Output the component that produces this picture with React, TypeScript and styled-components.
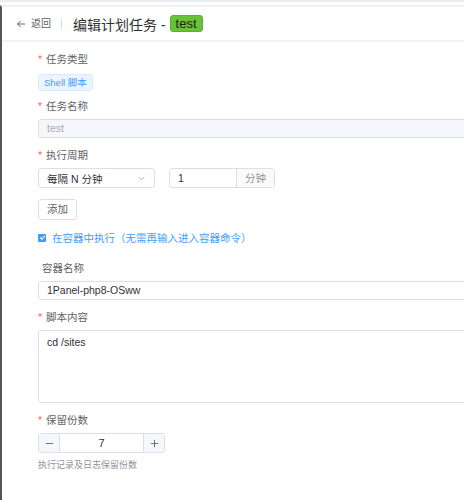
import React from "react";
import styled, { createGlobalStyle } from "styled-components";

const Global = createGlobalStyle`
  body {
    margin: 0;
    background: #fff;
    font-family: "Liberation Sans", "Noto Sans CJK SC", sans-serif;
    color: #303133;
    overflow: hidden;
  }
`;

const TopStrip = styled.div`
  height: 2px;
  background: #e8ecf5;
  border-bottom: 3px solid #fff;
`;

const Page = styled.div`
  border-top: 2px solid #eef0f3;
  border-left: 2px solid #555;
  height: 493px;
  overflow: hidden;
`;

const Header = styled.div`
  display: flex;
  align-items: center;
  height: 33px;
  padding-left: 14px;
  border-bottom: 2px solid #f2f3f5;
`;

const Back = styled.span`
  display: flex;
  align-items: center;
  gap: 5px;
  font-size: 10px;
  color: #606266;
  padding-right: 10px;
  border-right: 1px solid #dcdfe6;
  line-height: 12px;
`;

const Title = styled.span`
  font-size: 14px;
  color: #303133;
  margin-left: 11px;
`;

const GreenTag = styled.span`
  margin-left: 4px;
  background: #67c23a;
  color: #222;
  border: 1px solid #5daf34;
  border-radius: 3px;
  font-size: 13px;
  padding: 0 5px;
  line-height: 15px;
`;

const Form = styled.div`
  padding: 11px 0 0 36px;
  display: flex;
  flex-direction: column;
`;

const Item = styled.div<{ mb?: number }>`
  margin-bottom: ${(p) => p.mb ?? 11}px;
`;

const Label = styled.div<{ req?: boolean }>`
  font-size: 10.5px;
  color: #606266;
  line-height: 13px;
  margin-bottom: 6px;
  &::before {
    content: ${(p) => (p.req ? '"*"' : '""')};
    color: #f56c6c;
    margin-right: 4px;
  }
`;

const BlueTag = styled.span`
  display: inline-block;
  background: #ecf5ff;
  border: 1px solid #d9ecff;
  color: #409eff;
  font-size: 9.5px;
  line-height: 13px;
  padding: 1px 5px;
  border-radius: 3px;
`;

const Input = styled.div<{ disabled?: boolean; h?: number }>`
  width: 480px;
  height: ${(p) => p.h ?? 19}px;
  box-sizing: border-box;
  border: 1px solid #dcdfe6;
  border-radius: 3px;
  background: ${(p) => (p.disabled ? "#f5f7fa" : "#fff")};
  color: ${(p) => (p.disabled ? "#a8abb2" : "#303133")};
  font-size: 10.5px;
  padding: ${(p) => (p.h ? "4px 8px" : "0 8px")};
  line-height: ${(p) => (p.h ? "14px" : "17px")};
`;

const Row = styled.div`
  display: flex;
  gap: 14px;
`;

const Select = styled.div`
  width: 117px;
  height: 20px;
  box-sizing: border-box;
  border: 1px solid #dcdfe6;
  border-radius: 3px;
  display: flex;
  align-items: center;
  justify-content: space-between;
  padding: 0 8px;
  font-size: 10.5px;
  color: #303133;
`;

const Group = styled.div`
  display: flex;
  width: 106px;
  height: 20px;
  box-sizing: border-box;
  border: 1px solid #dcdfe6;
  border-radius: 3px;
  font-size: 10.5px;
`;

const GroupInput = styled.div`
  flex: 1;
  padding: 0 8px;
  line-height: 18px;
`;

const Append = styled.div`
  width: 37px;
  border-left: 1px solid #dcdfe6;
  background: #fafafa;
  color: #909399;
  text-align: center;
  line-height: 18px;
`;

const Button = styled.div`
  display: inline-block;
  border: 1px solid #dcdfe6;
  border-radius: 3px;
  font-size: 10.5px;
  color: #606266;
  padding: 0 8px;
  line-height: 19px;
`;

const Check = styled.div`
  display: flex;
  align-items: center;
  gap: 6px;
  font-size: 10.5px;
  color: #409eff;
`;

const Box = styled.span`
  width: 8px;
  height: 8px;
  background: #409eff;
  border-radius: 1px;
  display: flex;
  align-items: center;
  justify-content: center;
`;

const Number = styled.div`
  display: flex;
  width: 127px;
  height: 20px;
  box-sizing: border-box;
  border: 1px solid #dcdfe6;
  border-radius: 3px;
  font-size: 11px;
`;

const Step = styled.div<{ side: "l" | "r" }>`
  width: 20px;
  background: #f5f7fa;
  color: #606266;
  display: flex;
  align-items: center;
  justify-content: center;
  ${(p) => (p.side === "l" ? "border-right" : "border-left")}: 1px solid #dcdfe6;
`;

const NumVal = styled.div`
  flex: 1;
  text-align: center;
  line-height: 18px;
  color: #303133;
`;

const Help = styled.div`
  font-size: 9px;
  color: #909399;
  margin-top: 5px;
`;

export default function App() {
  return (
    <>
      <Global />
      <TopStrip />
      <Page>
        <Header>
          <Back>
            <svg width="10" height="10" viewBox="0 0 10 10" fill="none" stroke="#606266" strokeWidth="1">
              <path d="M9 5H1.5M4.5 2L1.5 5l3 3" />
            </svg>
            返回
          </Back>
          <Title>编辑计划任务 -</Title>
          <GreenTag>test</GreenTag>
        </Header>
        <Form>
          <Item mb={9}>
            <Label req>任务类型</Label>
            <BlueTag>Shell 脚本</BlueTag>
          </Item>
          <Item>
            <Label req>任务名称</Label>
            <Input disabled>test</Input>
          </Item>
          <Item>
            <Label req>执行周期</Label>
            <Row>
              <Select>
                每隔 N 分钟
                <svg width="9" height="9" viewBox="0 0 10 10" fill="none" stroke="#a8abb2" strokeWidth="1">
                  <path d="M2 3.5l3 3 3-3" />
                </svg>
              </Select>
              <Group>
                <GroupInput>1</GroupInput>
                <Append>分钟</Append>
              </Group>
            </Row>
          </Item>
          <Item mb={10}>
            <Button>添加</Button>
          </Item>
          <Item mb={17}>
            <Check>
              <Box>
                <svg width="7" height="7" viewBox="0 0 8 8" fill="none" stroke="#fff" strokeWidth="1.3">
                  <path d="M1.5 4l2 2 3-4" />
                </svg>
              </Box>
              在容器中执行（无需再输入进入容器命令）
            </Check>
          </Item>
          <Item>
            <Label>容器名称</Label>
            <Input>1Panel-php8-OSww</Input>
          </Item>
          <Item>
            <Label req>脚本内容</Label>
            <Input h={73}>cd /sites</Input>
          </Item>
          <Item>
            <Label req>保留份数</Label>
            <Number>
              <Step side="l">
                <svg width="9" height="9" viewBox="0 0 10 10" stroke="#606266" strokeWidth="1">
                  <path d="M1 5h8" />
                </svg>
              </Step>
              <NumVal>7</NumVal>
              <Step side="r">
                <svg width="9" height="9" viewBox="0 0 10 10" stroke="#606266" strokeWidth="1">
                  <path d="M1 5h8M5 1v8" />
                </svg>
              </Step>
            </Number>
            <Help>执行记录及日志保留份数</Help>
          </Item>
        </Form>
      </Page>
    </>
  );
}
